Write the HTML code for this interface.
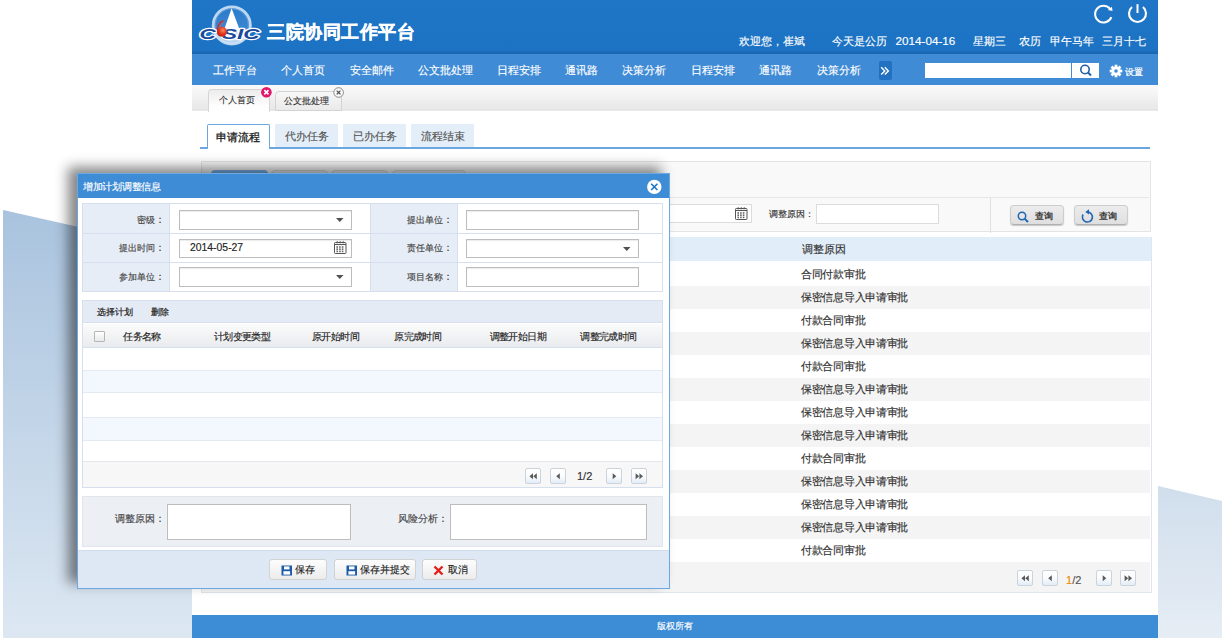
<!DOCTYPE html>
<html><head><meta charset="utf-8">
<style>
*{box-sizing:border-box;margin:0;padding:0}
html,body{width:1224px;height:638px;overflow:hidden;background:#fff;font-family:"Liberation Sans",sans-serif;font-size:11px;color:#333;-webkit-text-stroke-width:0.15px}
.a{position:absolute}
#bgl{left:0;top:0;width:192px;height:638px}
#bgr{left:1158px;top:480px;width:66px;height:158px}
#main{left:192px;top:0;width:966px;height:638px;background:#fff}
#hdr{left:0;top:0;width:966px;height:54px;background:linear-gradient(#1f75c6,#1c72c3 93%,#1a68b4 97%,#1a66b2)}
#nav{left:0;top:54px;width:966px;height:31px;background:#3f8bd6}
.nv{top:8px;color:#fff;font-size:11px;line-height:16px;white-space:nowrap;font-weight:500}
#tabs{left:0;top:85px;width:966px;height:26px;background:linear-gradient(#f9f9f9,#f5f5f5 30%,#e8e8e8 88%,#eeeeee 90%,#dedede 95%,#f2f2f2)}
#foot{left:0;top:615px;width:966px;height:23px;background:#3d8cd6;color:#fff;text-align:center;line-height:23px;font-size:10px}
.ctab{top:124px;height:23.3px;line-height:24px;text-align:center;font-size:11px;color:#555;background:#e3eef8}
#panel{left:9px;top:161px;width:950px;height:432px;border:1px solid transparent;background:#fff}
.row{left:0;width:948px;height:23px;line-height:23px}
.row span{position:absolute;left:599px;top:-0.5px;font-size:11px;letter-spacing:-0.3px;color:#333}
#dlg{left:77px;top:173px;width:593px;height:416px;background:#fff;border:1px solid #6ea8e2;box-shadow:-9px -6px 12px 0 rgba(0,0,0,.48)}
#dtitle{left:0;top:0;width:591px;height:24px;background:#3e8cd6;color:#fff;font-size:10px;letter-spacing:-0.3px;line-height:25px;padding-left:5px}
.btn{border:1px solid #cdcdcd;border-bottom-color:#b0b0b0;border-radius:4px;background:linear-gradient(#ececec,#dfdfdf);box-shadow:0 1px 1px rgba(0,0,0,.2);font-size:10px;line-height:16px;color:#333}
.pb{width:16px;height:16px;border:1px solid #cdd3da;border-radius:2px;background:linear-gradient(#fff,#fafcfe 50%,#e2ecf7)}
.pb svg{position:absolute;left:0;top:0}
</style></head><body>
<svg class="a" id="bgl" width="192" height="638"><defs><linearGradient id="gl" x1="0" y1="0" x2="0" y2="1"><stop offset="0" stop-color="#a9c3de"/><stop offset="1" stop-color="#dce7f2"/></linearGradient></defs><polygon points="3,210 192,252.5 192,638 3,638" fill="url(#gl)"/></svg>
<svg class="a" id="bgr" width="66" height="158"><defs><linearGradient id="gr" x1="0" y1="0" x2="0" y2="1"><stop offset="0" stop-color="#d0deec"/><stop offset="1" stop-color="#e6edf5"/></linearGradient></defs><polygon points="0,6 64,21 64,158 0,158" fill="url(#gr)"/></svg>
<div class="a" id="main">
 <div class="a" id="hdr">
  <svg class="a" style="left:0;top:0" width="80" height="54">
   <defs><linearGradient id="lg1" x1="0" y1="0" x2="0" y2="1"><stop offset="0" stop-color="#2a7acb"/><stop offset="0.6" stop-color="#3a87d2"/><stop offset="0.8" stop-color="#a9cdee"/><stop offset="1" stop-color="#d6e8f7"/></linearGradient>
   <radialGradient id="rb" cx="0.6" cy="0.35" r="0.7"><stop offset="0" stop-color="#ff8a5a"/><stop offset="0.5" stop-color="#e83a1e"/><stop offset="1" stop-color="#b81c10"/></radialGradient></defs>
   <circle cx="39.8" cy="25.4" r="18.6" fill="url(#lg1)" stroke="#cfe2f5" stroke-opacity="0.9" stroke-width="2.8"/>
   <circle cx="39.8" cy="25.4" r="16.6" fill="none" stroke="#8fbde8" stroke-opacity="0.6" stroke-width="0.8"/>
   <polygon points="39.6,8.3 32,30 47.8,30" fill="#fff"/>
   <text x="7.5" y="38.6" font-family="Liberation Sans" font-weight="bold" font-style="italic" font-size="15.5" fill="#1b4a9a" stroke="#fff" stroke-width="2.4" stroke-linejoin="round" paint-order="stroke" textLength="60" lengthAdjust="spacingAndGlyphs">C  SIC</text>
   <circle cx="29.9" cy="31.8" r="5" fill="url(#rb)"/>
   <path d="M25.6,32.5 C24.8,27 27,21.8 31.5,20.6" stroke="#d42a1a" stroke-width="1.3" fill="none"/>
   <path d="M28,29 C28,25.5 29.8,22.8 32.2,22" stroke="#e85a3a" stroke-width="0.8" fill="none"/>
  </svg>
  <div class="a" style="left:75px;top:20px;color:#fff;font-size:18px;font-weight:bold;line-height:24px;letter-spacing:0.5px;-webkit-text-stroke:0.35px #fff;white-space:nowrap">三院协同工作平台</div>
  <svg class="a" style="left:900px;top:3px" width="60" height="24">
   <path d="M19.34,14.11 A8.4,8.4 0 1 1 18.12,5.93" stroke="#fff" stroke-width="2" fill="none"/>
   <path d="M20.0,3.8 L15.9,7.0 L20.5,8.0 Z" fill="#fff"/>
   <path d="M40.04,3.99 A8.5,8.5 0 1 0 50.96,3.99" stroke="#fff" stroke-width="2.1" fill="none"/>
   <path d="M45.5,1.2 V10" stroke="#fff" stroke-width="2" fill="none"/>
  </svg>
  <div class="a" style="top:33px;left:547px;color:#fff;font-size:11px;line-height:16px;white-space:nowrap">欢迎您，崔斌</div>
  <div class="a" style="top:33px;left:640px;color:#fff;font-size:11px;line-height:16px;white-space:nowrap">今天是公历</div>
  <div class="a" style="top:33px;left:703.5px;color:#fff;font-size:11.7px;line-height:16px;white-space:nowrap">2014-04-16</div>
  <div class="a" style="top:33px;left:781px;color:#fff;font-size:11px;line-height:16px;white-space:nowrap">星期三</div>
  <div class="a" style="top:33px;left:827px;color:#fff;font-size:11px;line-height:16px;white-space:nowrap">农历</div>
  <div class="a" style="top:33px;left:858px;color:#fff;font-size:11px;line-height:16px;white-space:nowrap">甲午马年</div>
  <div class="a" style="top:33px;left:910px;color:#fff;font-size:11px;line-height:16px;white-space:nowrap">三月十七</div>
 </div>
 <div class="a" id="nav">
  <div class="a nv" style="left:21px">工作平台</div>
  <div class="a nv" style="left:89px">个人首页</div>
  <div class="a nv" style="left:158px">安全邮件</div>
  <div class="a nv" style="left:226px">公文批处理</div>
  <div class="a nv" style="left:305px">日程安排</div>
  <div class="a nv" style="left:373px">通讯路</div>
  <div class="a nv" style="left:430px">决策分析</div>
  <div class="a nv" style="left:499px">日程安排</div>
  <div class="a nv" style="left:567px">通讯路</div>
  <div class="a nv" style="left:625px">决策分析</div>
  <div class="a" style="left:687px;top:7px;width:13px;height:19px;background:#2170c2;border-radius:2px"><svg class="a" style="left:0;top:0" width="13" height="19"><path d="M2.2,6.2 L5.8,9.9 L2.2,13.6 M5.8,6.2 L9.4,9.9 L5.8,13.6" stroke="#fff" stroke-width="1.4" fill="none"/></svg></div>
  <div class="a" style="left:733px;top:9px;width:146px;height:15px;background:#fff"></div>
  <div class="a" style="left:880px;top:9px;width:27px;height:15px;background:#fff"></div>
  <svg class="a" style="left:880px;top:9px" width="27" height="15"><circle cx="13" cy="6.5" r="4.2" stroke="#1f5fa8" stroke-width="1.6" fill="none"/><path d="M16,9.5 L19,12.5" stroke="#1f5fa8" stroke-width="2"/></svg>
  <svg class="a" style="left:917px;top:10px" width="14" height="14"><g transform="translate(7,7)" fill="#fff"><circle r="4.6"/><g id="tooth"><rect x="-1.4" y="-6.3" width="2.8" height="3"/></g><use href="#tooth" transform="rotate(45)"/><use href="#tooth" transform="rotate(90)"/><use href="#tooth" transform="rotate(135)"/><use href="#tooth" transform="rotate(180)"/><use href="#tooth" transform="rotate(225)"/><use href="#tooth" transform="rotate(270)"/><use href="#tooth" transform="rotate(315)"/><circle r="1.8" fill="#3f8bd6"/></g></svg>
  <div class="a" style="left:933px;top:9.5px;color:#fff;font-size:9px;-webkit-text-stroke:0.2px #fff;line-height:16px">设置</div>
 </div>
 <div class="a" id="tabs">
  <div class="a" style="left:15.5px;top:3.5px;width:62px;height:23px;border:1px solid #d6d6d6;border-bottom:none;border-radius:4px 4px 0 0;background:linear-gradient(#ececec,#fdfdfd 70%,#fff)"></div>
  <div class="a" style="left:27px;top:7px;font-size:9.4px;line-height:16px;color:#333;white-space:nowrap">个人首页</div>
  <div class="a" style="left:82.5px;top:5.5px;width:67px;height:20px;border:1px solid #d3d3d3;border-radius:4px 4px 0 0;background:linear-gradient(#f7f7f7,#eaeaea)"></div>
  <div class="a" style="left:91.7px;top:7.5px;font-size:9.4px;line-height:16px;color:#333;white-space:nowrap">公文批处理</div>
  <svg class="a" style="left:68px;top:1px" width="13" height="13"><circle cx="6.4" cy="6.2" r="5.3" fill="#e3156b"/><path d="M4.3,4.1 L8.5,8.3 M8.5,4.1 L4.3,8.3" stroke="#fff" stroke-width="1.7"/></svg>
  <svg class="a" style="left:140px;top:1px" width="13" height="13"><circle cx="6.6" cy="6.5" r="4.8" fill="#fafafa" stroke="#8a8a8a" stroke-width="1"/><path d="M4.7,4.6 L8.5,8.4 M8.5,4.6 L4.7,8.4" stroke="#444" stroke-width="1.1"/></svg>
 </div>
 <div class="a" style="left:8px;top:147.3px;width:950px;height:1.4px;background:#6aa6e0"></div>
 <div class="a ctab" style="left:14.5px;width:63px;height:25px;background:#fff;color:#1a1a1a;-webkit-text-stroke:0.3px #1a1a1a;border:1.3px solid #6aa6e0;border-bottom:none;border-radius:2px 2px 0 0;line-height:24px">申请流程</div>
 <div class="a ctab" style="left:83px;width:63px">代办任务</div>
 <div class="a ctab" style="left:151px;width:63px">已办任务</div>
 <div class="a ctab" style="left:219px;width:63px">流程结束</div>
 
 <div class="a" id="panel">
  <div class="a" style="left:-1px;top:-1px;width:950px;height:71px;background:#f9f9f9;border:1px solid #e4e4e4"></div>
  <div class="a" style="left:0;top:35px;width:947px;height:1px;background:#e6e6e6"></div>
  <div class="a" style="left:-1px;top:75px;width:951px;height:356px;border:1px solid #dfe5ec"></div>
  <div class="a" style="left:8.5px;top:7.5px;width:57.5px;height:12px;background:#7ab4ec;border-radius:4px 4px 0 0"></div>
  <div class="a" style="left:69px;top:8px;width:57px;height:12px;background:#ececec;border:1px solid #d8d8d8;border-radius:4px 4px 0 0"></div>
  <div class="a" style="left:129px;top:8px;width:57px;height:12px;background:#ececec;border:1px solid #d8d8d8;border-radius:4px 4px 0 0"></div>
  <div class="a" style="left:190px;top:8px;width:74px;height:12px;background:#ececec;border:1px solid #d8d8d8;border-radius:4px 4px 0 0"></div>
  
  <div class="a" style="left:788px;top:36px;width:1px;height:35px;background:#e0e0e0"></div>
  <div class="a" style="left:400px;top:42px;width:150px;height:19px;background:#fff;border:1px solid #dcdcdc"></div>
  <svg class="a" style="left:532px;top:44px" width="15" height="15"><rect x="1.5" y="2.5" width="11.5" height="11" rx="0.8" fill="none" stroke="#555" stroke-width="1"/><path d="M1.5,4.5 H13" stroke="#555" stroke-width="1.1"/><path d="M4.2,1.2 V3.2 M7.2,1.2 V3.2 M10.2,1.2 V3.2" stroke="#555" stroke-width="1.1"/><rect x="3.4" y="6.2" width="1.6" height="1.6" fill="#666"/><rect x="3.4" y="8.4" width="1.6" height="1.6" fill="#666"/><rect x="3.4" y="10.6" width="1.6" height="1.6" fill="#666"/><rect x="6.1" y="6.2" width="1.6" height="1.6" fill="#666"/><rect x="6.1" y="8.4" width="1.6" height="1.6" fill="#666"/><rect x="6.1" y="10.6" width="1.6" height="1.6" fill="#666"/><rect x="8.8" y="6.2" width="1.6" height="1.6" fill="#666"/><rect x="8.8" y="8.4" width="1.6" height="1.6" fill="#666"/><rect x="8.8" y="10.6" width="1.6" height="1.6" fill="#666"/></svg>
  <div class="a" style="left:566.5px;top:44px;font-size:9px;line-height:16px;color:#333;white-space:nowrap">调整原因<span style="margin-left:0.5px">：</span></div>
  <div class="a" style="left:614px;top:42px;width:123px;height:20px;background:#fff;border:1px solid #dcdcdc"></div>
  <div class="a btn" style="left:808px;top:43px;width:54px;height:20px"><svg class="a" style="left:4px;top:2px" width="16" height="16"><circle cx="7" cy="8" r="3.7" stroke="#1d66b5" stroke-width="1.5" fill="none"/><path d="M9.6,10.6 L13,14" stroke="#1d66b5" stroke-width="1.9"/></svg><span class="a" style="left:24px;top:1.5px;font-size:9px;-webkit-text-stroke:0.35px #333">查询</span></div>
  <div class="a btn" style="left:872px;top:43px;width:54px;height:20px"><svg class="a" style="left:0;top:0" width="22" height="20"><path d="M12.6,6 A5,5 0 1 1 8.07,8.5" stroke="#1d66b5" stroke-width="1.6" fill="none"/><path d="M10.3,5.9 L14,3.3 L14,8.6 Z" fill="#1d66b5"/></svg><span class="a" style="left:24px;top:1.5px;font-size:9px;-webkit-text-stroke:0.35px #333">查询</span></div>
  <div class="a" style="left:0;top:75px;width:949px;height:24px;background:#e1edf8"></div>
  <div class="a" style="left:600px;top:79px;font-size:11px;line-height:16px;color:#333;white-space:nowrap">调整原因</div>
  <div class="a row" style="top:101px;background:#fff"><span>合同付款审批</span></div>
  <div class="a row" style="top:124px;background:#f4f4f4"><span>保密信息导入申请审批</span></div>
  <div class="a row" style="top:147px;background:#fff"><span>付款合同审批</span></div>
  <div class="a row" style="top:170px;background:#f4f4f4"><span>保密信息导入申请审批</span></div>
  <div class="a row" style="top:193px;background:#fff"><span>付款合同审批</span></div>
  <div class="a row" style="top:216px;background:#f4f4f4"><span>保密信息导入申请审批</span></div>
  <div class="a row" style="top:239px;background:#fff"><span>保密信息导入申请审批</span></div>
  <div class="a row" style="top:262px;background:#f4f4f4"><span>保密信息导入申请审批</span></div>
  <div class="a row" style="top:285px;background:#fff"><span>付款合同审批</span></div>
  <div class="a row" style="top:308px;background:#f4f4f4"><span>保密信息导入申请审批</span></div>
  <div class="a row" style="top:331px;background:#fff"><span>保密信息导入申请审批</span></div>
  <div class="a row" style="top:354px;background:#f4f4f4"><span>保密信息导入申请审批</span></div>
  <div class="a row" style="top:377px;background:#fff"><span>付款合同审批</span></div>
  <div class="a" style="left:0;top:400px;width:948px;height:30px;background:#f4f4f4"></div>
  <div class="a pb" style="left:815px;top:408px"><svg width="15" height="15"><path d="M3.4,7.3 L7,4.3 V10.3 Z M7.2,7.3 L10.8,4.3 V10.3 Z" fill="#5a5a5a"/></svg></div>
  <div class="a pb" style="left:839.5px;top:408px"><svg width="15" height="15"><path d="M5.2,7.3 L8.8,4.3 V10.3 Z" fill="#5a5a5a"/></svg></div>
  <div class="a" style="left:864px;top:409.5px;font-size:11px;line-height:16px;color:#555;white-space:nowrap"><span style="color:#f08a00">1</span>/2</div>
  <div class="a pb" style="left:894px;top:408px"><svg width="15" height="15"><path d="M5.7,4.3 L9.3,7.3 L5.7,10.3 Z" fill="#5a5a5a"/></svg></div>
  <div class="a pb" style="left:918px;top:408px"><svg width="15" height="15"><path d="M3.6,4.3 L7.2,7.3 L3.6,10.3 Z M7.4,4.3 L11,7.3 L7.4,10.3 Z" fill="#5a5a5a"/></svg></div>
 </div>
 <div class="a" id="foot" style="font-size:9px">版权所有</div>
</div>
<div class="a" id="dlg">
 <div class="a" id="dtitle">增加计划调整信息</div>
 <svg class="a" style="left:568px;top:5px" width="16" height="16"><circle cx="8.3" cy="7.9" r="7.2" fill="#fff"/><path d="M5.2,4.8 L11.4,11 M11.4,4.8 L5.2,11" stroke="#1f72c6" stroke-width="1.6"/></svg>
  <div class="a" style="left:4px;top:29px;width:581px;height:89px;background:#fff;border:1px solid #d6dfed"></div>
  <div class="a" style="left:5px;top:30px;width:87px;height:87px;background:#e6edf6;border-right:1px solid #d6dfed"></div>
  <div class="a" style="left:292px;top:30px;width:88px;height:87px;background:#e6edf6;border-left:1px solid #d6dfed;border-right:1px solid #d6dfed"></div>
  <div class="a" style="left:5px;top:59px;width:579px;height:1px;background:#d6dfed"></div>
  <div class="a" style="left:5px;top:88px;width:579px;height:1px;background:#d6dfed"></div>
  <div class="a" style="left:-33.3px;top:37.5px;width:120px;text-align:right;white-space:nowrap;line-height:16px;font-size:9.1px;color:#444">密级<span style="font-size:9.6px">：</span></div>
  <div class="a" style="left:-33.3px;top:66px;width:120px;text-align:right;white-space:nowrap;line-height:16px;font-size:9.1px;color:#444">提出时间<span style="font-size:9.6px">：</span></div>
  <div class="a" style="left:-33.3px;top:94.5px;width:120px;text-align:right;white-space:nowrap;line-height:16px;font-size:9.1px;color:#444">参加单位<span style="font-size:9.6px">：</span></div>
  <div class="a" style="left:255px;top:37.5px;width:120px;text-align:right;white-space:nowrap;line-height:16px;font-size:9.1px;color:#444">提出单位<span style="font-size:9.6px">：</span></div>
  <div class="a" style="left:255px;top:66px;width:120px;text-align:right;white-space:nowrap;line-height:16px;font-size:9.1px;color:#444">责任单位<span style="font-size:9.6px">：</span></div>
  <div class="a" style="left:255px;top:94.5px;width:120px;text-align:right;white-space:nowrap;line-height:16px;font-size:9.1px;color:#444">项目名称<span style="font-size:9.6px">：</span></div>
  <div class="a" style="left:101px;top:36px;width:173px;height:19.5px;background:#fff;border:1px solid #bdbdbd;box-shadow:inset 0 1px 1px rgba(0,0,0,.08)"></div>
  <div class="a" style="left:101px;top:64.5px;width:173px;height:19.5px;background:#fff;border:1px solid #bdbdbd;box-shadow:inset 0 1px 1px rgba(0,0,0,.08)"></div>
  <div class="a" style="left:101px;top:93px;width:173px;height:19.5px;background:#fff;border:1px solid #bdbdbd;box-shadow:inset 0 1px 1px rgba(0,0,0,.08)"></div>
  <div class="a" style="left:388px;top:36px;width:173px;height:19.5px;background:#fff;border:1px solid #bdbdbd;box-shadow:inset 0 1px 1px rgba(0,0,0,.08)"></div>
  <div class="a" style="left:388px;top:64.5px;width:173px;height:19.5px;background:#fff;border:1px solid #bdbdbd;box-shadow:inset 0 1px 1px rgba(0,0,0,.08)"></div>
  <div class="a" style="left:388px;top:93px;width:173px;height:19.5px;background:#fff;border:1px solid #bdbdbd;box-shadow:inset 0 1px 1px rgba(0,0,0,.08)"></div>
  <div class="a" style="left:101px;top:36px;width:173px;height:19.5px;"><svg class="a" style="right:8px;top:8px" width="8" height="5"><path d="M0,0 H7.5 L3.75,4 Z" fill="#505050"/></svg></div>
  <div class="a" style="left:101px;top:93px;width:173px;height:19.5px;"><svg class="a" style="right:8px;top:8px" width="8" height="5"><path d="M0,0 H7.5 L3.75,4 Z" fill="#505050"/></svg></div>
  <div class="a" style="left:388px;top:64.5px;width:173px;height:19.5px;"><svg class="a" style="right:8px;top:8px" width="8" height="5"><path d="M0,0 H7.5 L3.75,4 Z" fill="#505050"/></svg></div>
  <div class="a" style="left:112px;top:66px;white-space:nowrap;line-height:16px;font-size:10.4px;color:#222">2014-05-27</div>
  <svg class="a" style="left:255px;top:66px" width="15" height="15"><rect x="1.5" y="2.5" width="11.5" height="11" rx="0.8" fill="none" stroke="#555" stroke-width="1"/><path d="M1.5,4.5 H13" stroke="#555" stroke-width="1.1"/><path d="M4.2,1.2 V3.2 M7.2,1.2 V3.2 M10.2,1.2 V3.2" stroke="#555" stroke-width="1.1"/><rect x="3.4" y="6.2" width="1.6" height="1.6" fill="#666"/><rect x="3.4" y="8.4" width="1.6" height="1.6" fill="#666"/><rect x="3.4" y="10.6" width="1.6" height="1.6" fill="#666"/><rect x="6.1" y="6.2" width="1.6" height="1.6" fill="#666"/><rect x="6.1" y="8.4" width="1.6" height="1.6" fill="#666"/><rect x="6.1" y="10.6" width="1.6" height="1.6" fill="#666"/><rect x="8.8" y="6.2" width="1.6" height="1.6" fill="#666"/><rect x="8.8" y="8.4" width="1.6" height="1.6" fill="#666"/><rect x="8.8" y="10.6" width="1.6" height="1.6" fill="#666"/></svg>
  <div class="a" style="left:4px;top:126px;width:581px;height:188px;background:#fff;border:1px solid #d6dfed"></div>
  <div class="a" style="left:5px;top:127px;width:579px;height:22px;background:#e5ebf4;border-bottom:1px solid #d6dfed"></div>
  <div class="a" style="left:19px;top:130px;white-space:nowrap;line-height:16px;font-size:9.3px;color:#222;-webkit-text-stroke:0.2px #222">选择计划</div>
  <div class="a" style="left:73px;top:130px;white-space:nowrap;line-height:16px;font-size:9.3px;color:#222;-webkit-text-stroke:0.2px #222">删除</div>
  <div class="a" style="left:5px;top:150px;width:579px;height:24px;background:linear-gradient(#fbfbfb,#e9ebee);border-bottom:1px solid #d6dfed"></div>
  <div class="a" style="left:16px;top:157px;width:11px;height:11px;background:linear-gradient(#fff,#e8e8e8);border:1px solid #b5b5b5;border-radius:1px"></div>
  <div class="a" style="left:45.2px;top:154.5px;white-space:nowrap;line-height:16px;font-size:10px;letter-spacing:-0.6px;color:#222">任务名称</div>
  <div class="a" style="left:135.9px;top:154.5px;white-space:nowrap;line-height:16px;font-size:10px;letter-spacing:-0.6px;color:#222">计划变更类型</div>
  <div class="a" style="left:234px;top:154.5px;white-space:nowrap;line-height:16px;font-size:10px;letter-spacing:-0.6px;color:#222">原开始时间</div>
  <div class="a" style="left:316.3px;top:154.5px;white-space:nowrap;line-height:16px;font-size:10px;letter-spacing:-0.6px;color:#222">原完成时间</div>
  <div class="a" style="left:411.6px;top:154.5px;white-space:nowrap;line-height:16px;font-size:10px;letter-spacing:-0.6px;color:#222">调整开始日期</div>
  <div class="a" style="left:502.3px;top:154.5px;white-space:nowrap;line-height:16px;font-size:10px;letter-spacing:-0.6px;color:#222">调整完成时间</div>
  <div class="a" style="left:5px;top:174px;width:579px;height:22.5px;background:#fff;border-bottom:1px solid #e3eaf3"></div>
  <div class="a" style="left:5px;top:196.5px;width:579px;height:22.5px;background:#f2f8fd;border-bottom:1px solid #e3eaf3"></div>
  <div class="a" style="left:5px;top:219px;width:579px;height:25px;background:#fff;border-bottom:1px solid #e3eaf3"></div>
  <div class="a" style="left:5px;top:244px;width:579px;height:22.5px;background:#f2f8fd;border-bottom:1px solid #e3eaf3"></div>
  <div class="a" style="left:5px;top:266.5px;width:579px;height:20.5px;background:#fff"></div>
  <div class="a" style="left:5px;top:287px;width:579px;height:26px;background:#f7f7f7;border-top:1px solid #e3e6ea"></div>
  <div class="a pb" style="left:447px;top:293.7px"><svg width="15" height="15"><path d="M3.4,7.3 L7,4.3 V10.3 Z M7.2,7.3 L10.8,4.3 V10.3 Z" fill="#5a5a5a"/></svg></div>
  <div class="a pb" style="left:472px;top:293.7px"><svg width="15" height="15"><path d="M5.2,7.3 L8.8,4.3 V10.3 Z" fill="#5a5a5a"/></svg></div>
  <div class="a pb" style="left:527.5px;top:293.7px"><svg width="15" height="15"><path d="M5.7,4.3 L9.3,7.3 L5.7,10.3 Z" fill="#5a5a5a"/></svg></div>
  <div class="a pb" style="left:553px;top:293.7px"><svg width="15" height="15"><path d="M3.6,4.3 L7.2,7.3 L3.6,10.3 Z M7.4,4.3 L11,7.3 L7.4,10.3 Z" fill="#5a5a5a"/></svg></div>
  <div class="a" style="left:499px;top:294px;white-space:nowrap;line-height:16px;font-size:11px;color:#333">1/2</div>
  <div class="a" style="left:4px;top:322px;width:581px;height:51px;background:#eceff4;border:1px solid #e1e5ec"></div>
  <div class="a" style="left:36.7px;top:337px;white-space:nowrap;line-height:16px;font-size:9.6px;color:#444">调整原因：</div>
  <div class="a" style="left:89px;top:329.5px;width:184px;height:36px;background:#fff;border:1px solid #bdbdbd"></div>
  <div class="a" style="left:320px;top:337px;white-space:nowrap;line-height:16px;font-size:9.6px;color:#444">风险分析：</div>
  <div class="a" style="left:372px;top:329.5px;width:197px;height:36px;background:#fff;border:1px solid #bdbdbd"></div>
  <div class="a" style="left:0px;top:376px;width:591px;height:38px;background:#dde8f4;border-top:1px solid #cfdcec"></div>
  <div class="a" style="left:190.7px;top:385.4px;width:58px;height:21px;border:1px solid #d2d2d2;border-radius:3px;background:linear-gradient(#fdfdfd,#ececec)"><svg class="a" style="left:11px;top:5px" width="12" height="12"><rect x="0.5" y="0.5" width="10.5" height="10" fill="#1b5aa6"/><rect x="3" y="1.4" width="5.5" height="3" fill="#fff"/><rect x="2.4" y="6.2" width="6.7" height="3.4" fill="#fff"/></svg><span class="a" style="left:25px;top:2px;font-size:10px;line-height:16px;color:#222">保存</span></div>
  <div class="a" style="left:256px;top:385.4px;width:81.5px;height:21px;border:1px solid #d2d2d2;border-radius:3px;background:linear-gradient(#fdfdfd,#ececec)"><svg class="a" style="left:11px;top:5px" width="12" height="12"><rect x="0.5" y="0.5" width="10.5" height="10" fill="#1b5aa6"/><rect x="3" y="1.4" width="5.5" height="3" fill="#fff"/><rect x="2.4" y="6.2" width="6.7" height="3.4" fill="#fff"/></svg><span class="a" style="left:25px;top:2px;font-size:9.5px;line-height:16px;color:#222;white-space:nowrap">保存并提交</span></div>
  <div class="a" style="left:344px;top:385.4px;width:54.5px;height:21px;border:1px solid #d2d2d2;border-radius:3px;background:linear-gradient(#fdfdfd,#ececec)"><svg class="a" style="left:10px;top:5px" width="12" height="12"><path d="M1.5,1.5 L9.5,9.5 M9.5,1.5 L1.5,9.5" stroke="#e0201b" stroke-width="2.4"/></svg><span class="a" style="left:24.5px;top:2px;font-size:9.8px;line-height:16px;color:#222">取消</span></div>
</div>
</body></html>
